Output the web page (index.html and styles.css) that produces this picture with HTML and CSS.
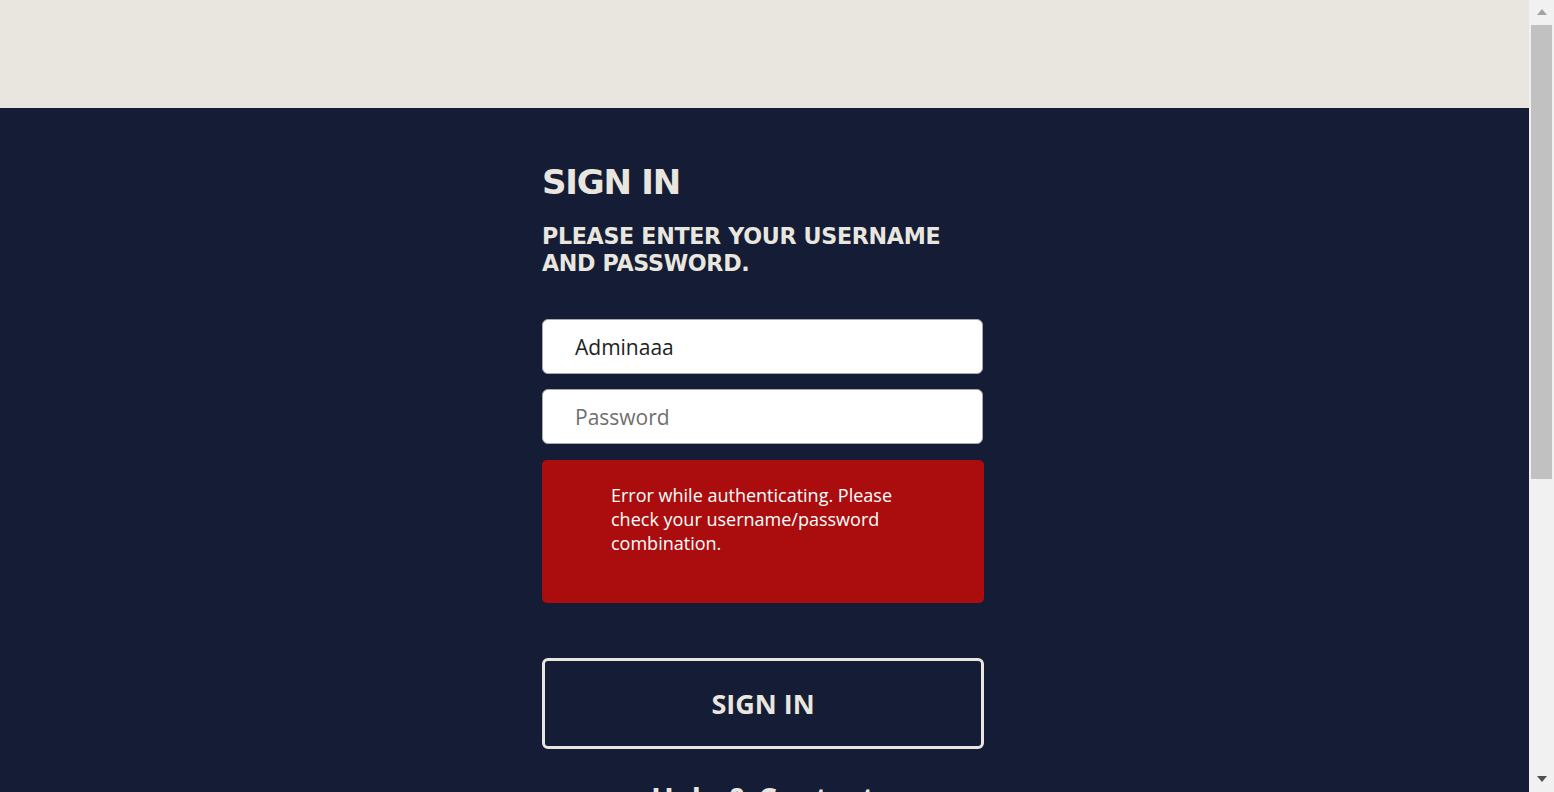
FILE: index.html
```html
<!DOCTYPE html>
<html lang="en">
<head>
<meta charset="utf-8">
<title>Sign in</title>
<link rel="stylesheet" href="styles.css">
</head>
<body>
<div class="page">
  <header class="topbar"></header>
  <main class="main">
    <div class="panel">
      <h1 class="title">SIGN IN</h1>
      <h2 class="subtitle">PLEASE ENTER YOUR USERNAME AND PASSWORD.</h2>
      <form class="form">
        <input class="field" type="text" value="Adminaaa">
        <input class="field" type="password" placeholder="Password">
        <div class="error">Error while authenticating. Please check your username/password combination.</div>
        <button class="btn" type="button">SIGN IN</button>
      </form>
      <h3 class="help">Help &amp; Contact</h3>
      <p class="help-text">If you have forgotten your password or do not have an account yet, please contact your administrator.</p>
    </div>
  </main>
</div>
<div class="scrollbar" aria-hidden="true">
  <div class="sb-btn"><span class="arrow-up"></span></div>
  <div class="sb-thumb"></div>
  <div class="sb-space"></div>
  <div class="sb-btn sb-btn-down"><span class="arrow-down"></span></div>
</div>
</body>
</html>
```
FILE: styles.css
```css
html, body {
  margin: 0;
  padding: 0;
}
body {
  display: flex;
  align-items: flex-start;
  background: #151c35;
  font-family: "Open Sans", "Liberation Sans", sans-serif;
  color: #e8e6df;
}
.page {
  flex: 1;
  min-width: 0;
}
.topbar {
  height: 108px;
  background: #e8e6df;
}
.main {
  display: flex;
  justify-content: center;
  padding: 54px 3px 300px 0;
}
.panel {
  width: 442px;
  display: flex;
  flex-direction: column;
}
.title {
  margin: 0;
  font-family: "DejaVu Sans", sans-serif;
  font-weight: bold;
  font-size: 34px;
  line-height: 40px;
  letter-spacing: -1.2px;
}
.subtitle {
  margin: 21px 0 0;
  font-family: "DejaVu Sans", sans-serif;
  font-weight: bold;
  font-size: 22.2px;
  line-height: 27px;
  letter-spacing: -0.32px;
  max-width: 410px;
}
.form {
  display: flex;
  flex-direction: column;
  margin-top: 42px;
}
.field {
  box-sizing: border-box;
  width: 441px;
  height: 55px;
  margin: 0 0 15px;
  padding: 0 32px;
  border: 1px solid #a9a9ad;
  border-radius: 6px;
  background: #fff;
  font-family: "Open Sans", sans-serif;
  font-size: 21px;
  color: #222;
  outline: none;
}
.field::placeholder {
  color: #6f6f6f;
}
.error {
  box-sizing: border-box;
  width: 442px;
  height: 143px;
  margin-top: 1px;
  padding: 23px 80px 0 69px;
  background: #ab0d0e;
  border-radius: 5px;
  font-size: 18px;
  line-height: 24px;
  color: #fff;
}
.btn {
  box-sizing: border-box;
  width: 442px;
  height: 91px;
  margin-top: 55px;
  background: transparent;
  border: 3px solid #e8e6df;
  border-radius: 6px;
  color: #e8e6df;
  font-family: "Open Sans", sans-serif;
  font-weight: bold;
  font-size: 27px;
  cursor: pointer;
}
.help {
  margin: 30px 0 0;
  text-align: center;
  font-size: 30px;
  font-weight: bold;
  line-height: 40px;
}
.help-text {
  margin: 20px 0 0;
  font-size: 17px;
  line-height: 24px;
  text-align: center;
}
.scrollbar {
  position: sticky;
  top: 0;
  flex: 0 0 25px;
  height: 100vh;
  display: flex;
  flex-direction: column;
  background: #f1f1f1;
}
.sb-btn {
  height: 25px;
  display: flex;
  align-items: center;
  justify-content: center;
}
.sb-btn-down {
  height: 22px;
  align-items: flex-start;
}
.arrow-up {
  width: 0;
  height: 0;
  border-left: 5px solid transparent;
  border-right: 5px solid transparent;
  border-bottom: 6px solid #a3a3a3;
  margin-top: -1px;
}
.arrow-down {
  width: 0;
  height: 0;
  margin-top: 6px;
  border-left: 5px solid transparent;
  border-right: 5px solid transparent;
  border-top: 6px solid #505050;
}
.sb-thumb {
  height: 454px;
  margin: 0 2px;
  background: #c1c1c1;
}
.sb-space {
  flex: 1;
}
```
